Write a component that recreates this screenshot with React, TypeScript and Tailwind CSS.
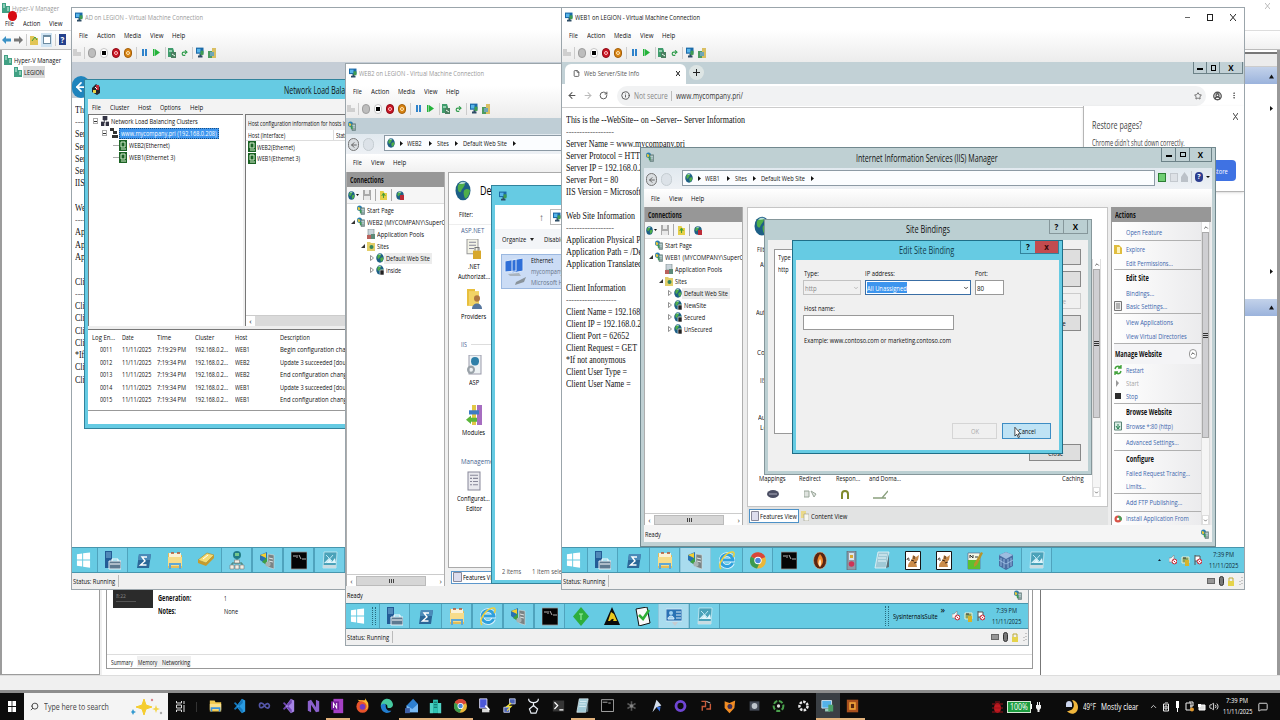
import { useLayoutEffect, useRef, useState, type ReactNode } from 'react';
import { ArrowLeft, ArrowRight, RotateCw, Info, Star, Search, MessageSquare, Volume2, ChevronUp, MoreVertical, CircleUserRound, FileIcon, Undo2 } from 'lucide-react';

// Text squeezed horizontally into a given width
function T({ w, className = '', children }: { w: number; className?: string; children: ReactNode }) {
  const ref = useRef<HTMLSpanElement>(null);
  const [k, setK] = useState(1);
  useLayoutEffect(() => {
    if (ref.current) setK(w / ref.current.offsetWidth);
  }, [w, children]);
  return (
    <span className={`inline-block shrink-0 whitespace-nowrap leading-none ${className}`} style={{ width: w }}>
      <span ref={ref} className="inline-block origin-left" style={{ transform: `scaleX(${k})` }}>{children}</span>
    </span>
  );
}

/* ---------- icons ---------- */

function Svg({ className = 'w-4 h-[19px]', box = '0 0 16 19', children }: { className?: string; box?: string; children: ReactNode }) {
  return <svg viewBox={box} preserveAspectRatio="none" className={`shrink-0 ${className}`}>{children}</svg>;
}

function Tri({ className = '' }: { className?: string }) {
  return <Svg className={`h-[5px] w-[3px] ${className}`} box="0 0 3 5"><path d="M0 0l3 2.500L0 5Z" fill="#111" /></Svg>;
}

function Expander({ open }: { open?: boolean }) {
  return (
    <Svg className="mr-[2px] h-[6px] w-[4px]" box="0 0 4 6">
      {open ? <path d="M4 1v4H0Z" fill="#333" /> : <path d="M.5.5l3 2.500-3 2.500Z" fill="#fff" stroke="#777" strokeWidth=".8" />}
    </Svg>
  );
}

function Globe({ className = 'w-2 h-[10px]', stopped = false }: { className?: string; stopped?: boolean }) {
  return (
    <Svg className={className} box="0 0 16 16">
      <circle cx="8" cy="8" r="7.5" fill="#1d5f86" />
      <path d="M3 4C6 1 9 1 10 3 9 6 7 6 6 9 4 10 2 8 3 4ZM9 8c3-2 5-1 6 0-1 4-3 6-5 6-1-2-2-4-1-6Z" fill="#4fae4a" />
      <path d="M4 3c2-2 5-2 7-1-2 1-5 1-7 1Z" fill="#cfe9f5" opacity=".8" />
      {stopped && <path d="M8 8h8v8H8Z" fill="#222" stroke="#fff" />}
    </Svg>
  );
}

function MonitorIcon({ className = 'w-2 h-[10px]' }: { className?: string }) {
  return (
    <Svg className={className} box="0 0 16 18">
      <path d="M0 1h15v10H0Z" fill="#1b6aa8" />
      <path d="M2 3h7v6H2Z" fill="#57b4ea" />
      <path d="M7 11h4v3H7ZM4 14h9v3H4Z" fill="#2c4c66" />
      <path d="M9 6h6v7H9Z" fill="#3f9c50" />
    </Svg>
  );
}

function IisIcon({ className = 'w-2 h-[10px]' }: { className?: string }) {
  return (
    <Svg className={className} box="0 0 16 18">
      <circle cx="5" cy="6" r="5" fill="#2a7fb0" />
      <path d="M1 5c3-3 4 0 6 1-1 3-3 4-4 4Z" fill="#e4c93a" />
      <path d="M8 5h7v12H8Z" fill="#8fa3a3" stroke="#4c6868" />
      <path d="M9 8h5M9 11h5" stroke="#dff" />
      <path d="M5 9h4v6H6Z" fill="#3c9a58" />
    </Svg>
  );
}

const guestIcons: Record<string, ReactNode> = {
  start: <path d="M1 3.5 6.6 2.7V9H1ZM7.6 2.5 15 1.5V9H7.6ZM1 10h5.6v6.4L1 15.6ZM7.6 10H15v7.6L7.6 16.6Z" fill="#fff" />,
  server: <><path d="M0 0h7v17H0Z" fill="#245c96" /><path d="M1 2h5M1 4h5M1 6h5" stroke="#7fb6dc" /><path d="M4 10h12v8H4Z" fill="#5d7990" stroke="#e6f3f9" /><path d="M7 10V8h6v2M5 13h10" stroke="#fff" fill="none" /></>,
  ps: <><path d="M3 3h12l-2 14H1Z" fill="#2b6798" /><path d="M3 3h12l-1 6H2Z" fill="#4b8bb9" /><path d="M11 6H6l3 4-4.500 4h6" stroke="#fff" strokeWidth="1.400" fill="none" /></>,
  folder: <><path d="M1 2h6l1 2h7v13H1Z" fill="#e0bd5c" /><path d="M2 2h12v4H2Z" fill="#f9f2d8" /><path d="M4 2h3M10 2h3" stroke="#b5522c" strokeWidth="1.5" /><path d="M1 6h14v9H1Z" fill="#f6dc8a" /><path d="M3 18v-5h10v5" stroke="#5da7d5" strokeWidth="2" fill="none" /></>,
  gold: <><path d="M0 9 9 2l7 2-8 8Z" fill="#f4dc73" stroke="#a98522" strokeWidth=".6" /><path d="M0 9v3l8 3 8-8V4l-8 8Z" fill="#c79b2c" /><path d="M5 8l5-4" stroke="#fff" /></>,
  net: <><circle cx="8" cy="4" r="4" fill="#217b85" /><path d="M6 2h4v3H6Z" fill="#74c78c" /><path d="M8 8v4M3 14v-2h10v2" stroke="#476" fill="none" /><path d="M5.500 9h5v3h-5ZM1 14h4v4H1ZM6 14h4v4H6ZM11 14h4v4h-4Z" fill="#f2efe4" stroke="#777" strokeWidth=".6" /></>,
  iis: <><path d="M0 4 7 1v13L0 9Z" fill="#2872b1" /><path d="M0 4 6 2v5Z" fill="#f3cf31" /><path d="M2 11l5-5v8Z" fill="#3f9e43" /><path d="M8 3l6 1v14l-6-2Z" fill="#7a8384" stroke="#d4dede" strokeWidth=".6" /><path d="M9 7l4 1M9 10l4 1" stroke="#e1e5e5" /><circle cx="8" cy="13" r="2.6" fill="#a9b3b3" /></>,
  cmd: <><path d="M0 1h16v17H0Z" fill="#050505" stroke="#999" strokeWidth=".8" /><path d="M2 5h3M6 4v3M8 4l2 4M11 8h4" stroke="#ddd" strokeWidth=".8" /></>,
  picture: <><path d="M2 1h13l-1 16H1Z" fill="#4aa2b9" stroke="#d6f0f8" strokeWidth=".7" /><path d="M2 12l5-5 3 4 3-4 1 5Z" fill="#e0f5fb" /><path d="M4 4l7 7M11 4 4 12" stroke="#b9e7f4" /><path d="M1 14h13v3H1Z" fill="#c8dce2" /></>,
  ie: <><path d="M13.5 12a6 6 0 1 1 .5-3H4" stroke="#e6f6ff" strokeWidth="4.6" fill="none" /><path d="M13.5 12a6 6 0 1 1 .5-3H4" stroke="#2fa0dd" strokeWidth="3" fill="none" /><path d="M2 18C-2 13 7 0 14 1c2 1 1 4 0 5" stroke="#f0cf3c" strokeWidth="1.5" fill="none" /></>,
  diamond: <><path d="M8 0 16 9.500 8 19 0 9.500Z" fill="#2dae3c" /><path d="M6 7h4M8 7v6" stroke="#9bf0a2" strokeWidth="1.1" /></>,
  alert: <><path d="M8 0 16 18H0Z" fill="#0b0b0b" /><path d="M7 5l3 2 3 7H9c2-3-1-3-3 0H4Z" fill="#e9c91d" /></>,
  check: <><path d="M1 2l11-2 3 16-11 3Z" fill="#fafafa" stroke="#111" /><path d="M4 8l4 4 6-9" stroke="#2fae36" strokeWidth="2.6" fill="none" /></>,
  card: <><path d="M0 2h16v12H0Z" fill="#2a72b4" stroke="#dcecf8" strokeWidth=".8" /><circle cx="5" cy="6" r="2" fill="#9fd2f2" /><path d="M2 12c0-4 6-4 6 0ZM10 5h5M10 8h5M10 11h5" fill="#9fd2f2" stroke="#d9ecf8" /><path d="M6 15h6l-3 4Z" fill="#c6cbd0" /></>,
  chrome: <><circle cx="8" cy="9.500" r="8" fill="#e9b73a" /><path d="M8 9.500 1 5.500A8 8 0 0 1 15.300 6Z" fill="#d8453a" /><path d="M8 9.500 1 5.500A8 8 0 0 0 7 17.500L10 11Z" fill="#3b9a4e" /><circle cx="8" cy="9.500" r="3.700" fill="#fff" /><circle cx="8" cy="9.500" r="2.800" fill="#4a86dc" /></>,
  flame: <><ellipse cx="8" cy="9.500" rx="6.500" ry="8.500" fill="#5a2511" stroke="#d8b490" strokeWidth=".6" /><path d="M8 3c4 5 4 9 0 13-4-4-3-8 0-13Z" fill="#f08a2c" /><path d="M8 8c2 3 1 6 0 8-2-2-2-5 0-8Z" fill="#ffe9c2" /></>,
  thumb: <><path d="M4 0h9v19H4Z" fill="#8d9aa8" stroke="#4c5a67" strokeWidth=".6" /><path d="M6 2h5v7H6Z" fill="#dce5ec" /><circle cx="8.500" cy="13" r="2.800" fill="#cf3456" /><path d="M7 4h3v3H7Z" fill="#d7a932" /></>,
  note: <><path d="M4 1h11l-3 16H1Z" fill="#9fc9d6" stroke="#e8f6fa" strokeWidth=".8" /><path d="M5 4h8M4 7h8M4 10h8" stroke="#e9f7fb" /><path d="M12 17l3-14v13Z" fill="#5b7077" /></>,
  tiger: <><path d="M.5.5h15v18H.5Z" fill="#fff" stroke="#151515" /><path d="M3 16c0-5 3-5 4-8l1-4 3 2 3-2-1 5-2 2 1 5Z" fill="#c98b4a" /><path d="M2 9c1-3 2-3 2 1M6 9l3 1M9 12l3-1M9 5v3" stroke="#2c1c10" strokeWidth=".9" fill="none" /></>,
  npp: <><path d="M1 2h12v16H1Z" fill="#f3f8e9" stroke="#557" strokeWidth=".6" /><path d="M1 9h12v9H1Z" fill="#5dc02f" /><path d="M3 7V4l3 3V4M8 6h3" stroke="#333" fill="none" /><path d="M7 13l7-12 2 1-6 12-3 2Z" fill="#b7942b" /></>,
  cube: <><path d="M8 1l7 3v11l-7 4-7-4V4Z" fill="#4a6ea3" /><path d="M8 1l7 3-7 4-7-4Z" fill="#9dbde0" /><path d="M3 7v8M6 8v9M10 8v9M13 7v8M1 9l7 4 7-4" stroke="#a6c7ea" strokeWidth=".8" fill="none" /></>,
};

const hostIcons: Record<string, ReactNode> = {
  explorer: <><path d="M1 3h6l1 2h7v11H1Z" fill="#f2c94e" /><path d="M1 7h14v7H1Z" fill="#fbe08a" /><path d="M3 16v-4h10v4" stroke="#3d93dc" strokeWidth="2" fill="none" /></>,
  vscode: <><path d="M11 1l4 2v13l-4 2-7-8Z" fill="#2a9be2" /><path d="M1 6l2-1 9 9v4ZM1 13l2 1 9-8V1Z" fill="#1478bd" /></>,
  loop: <path d="M8 9c-3-5-7-3-6 1 1 3 4 1 6-1s5-4 6 0c0 4-4 4-6 0Z" stroke="#5456a8" strokeWidth="2" fill="none" />,
  vs: <><path d="M11 1l4 2v13l-4 2-7-8Z" fill="#a685e6" /><path d="M1 6l2-1 9 9v4ZM1 13l2 1 9-8V1Z" fill="#7147b3" /></>,
  vs2: <path d="M1 4l4-2 6 9V2l4 2v12l-4 1-6-9v9l-4-2Z" fill="#8b61cc" />,
  onenote: <><path d="M3 1h12v17H3Z" fill="#a641c4" /><path d="M0 4h10v10H0Z" fill="#741b99" /><path d="M3 12V6l4 6V6" stroke="#fff" fill="none" strokeWidth="1.200" /></>,
  firefox: <><circle cx="8" cy="10" r="7.500" fill="#e8532c" /><path d="M2 2c2 3 5 1 8 3 4 2 4 7 1 9 4 0 4-4 4-8l-4-6c1 3-1 3-3 3Z" fill="#f8b632" /><circle cx="8" cy="10.500" r="3.500" fill="#713ac2" /></>,
  edge: <><path d="M1 10C1 4 5 1 9 1c4 0 7 4 7 7 0 4-6 5-7 3 1-4-4-5-8-1Z" fill="#46c9a0" /><path d="M1 9c2-3 7-3 6 1 0 4 4 6 7 5-4 5-13 3-13-6Z" fill="#227ed0" /></>,
  box: <><path d="M2 9l8-8 6 6v10H2Z" fill="#2d7fd0" /><path d="M2 9l7 4 7-6v10H2Z" fill="#78b9f3" /><path d="M0 12h6v6H0Z" fill="#3e5fa5" /></>,
  farm: <><path d="M5 2h6v16H5Z" fill="#2dc3b3" /><path d="M1 6h4v12H1ZM11 6h4v12h-4Z" fill="#4fd2c4" /><path d="M6 5h4M6 8h4M6 11h4" stroke="#0b5550" /></>,
  chrome: guestIcons.chrome,
  pcblue: <><path d="M2 1h9v11H2Z" fill="#4c58d9" stroke="#e8e8ff" /><path d="M5 13h9v4H5Z" fill="#dadada" /><path d="M9 9l5 5" stroke="#fff" strokeWidth="2" /></>,
  putty: <><path d="M8 1h7v6H8ZM1 11h7v6H1Z" fill="#4d63b5" stroke="#d0d6ee" /><path d="M10 6L5 10h5l-5 5" stroke="#f4e13b" strokeWidth="1.500" fill="none" /></>,
  medal: <><path d="M2 1c0 6 12 6 12 0M8 6v4" stroke="#e9eef5" strokeWidth="1.500" fill="none" /><path d="M8 9l5 4-2 5H5l-2-5Z" stroke="#e9eef5" strokeWidth="1.500" fill="none" /></>,
  term: <><path d="M1 3h14v13H1Z" fill="#353535" /><path d="M3 5l4 4-4 4M9 14h5" stroke="#fff" strokeWidth="1.500" fill="none" /></>,
  note: guestIcons.note,
  cmd: <><path d="M.5 2h15v14H.5Z" fill="#050505" stroke="#c5c5c5" /><path d="M2 5h6M9 6h3" stroke="#fff" strokeWidth=".8" /></>,
  atom: <><path d="M8 4v11M3 6.500l10 6M13 6.500l-10 6" stroke="#555" strokeWidth="2" /><circle cx="8" cy="9.500" r="2" fill="#888" /></>,
  plane: <><path d="M3 17L8 2l6 7-6 2Z" fill="#d3ddec" /><path d="M8 11l5-1-1 6Z" fill="#356fe0" /></>,
  ring: <circle cx="8" cy="9.500" r="5.500" stroke="#6f46d3" strokeWidth="3.500" fill="none" />,
  glyph: <><path d="M3 4h5v6H4v5M9 13h5V7" stroke="#c95a3a" strokeWidth="1.700" fill="none" /><path d="M9 4l5 2" stroke="#e7e7e7" /></>,
  blend: <><path d="M2 4l6 2 7-3-1 9-6 6-6-6Z" fill="#f08c24" /><circle cx="8.500" cy="10" r="3" fill="#3d2d54" /></>,
  cam: <><path d="M2 4h12v11H2Z" fill="#454b57" /><circle cx="8" cy="9.500" r="3.500" fill="#bfc5cc" /></>,
  swirl: <><circle cx="8" cy="9.500" r="6" stroke="#4aa04d" strokeWidth="2.500" strokeDasharray="5 2" fill="none" /><circle cx="8" cy="9.500" r="2" fill="#ddd" /></>,
  gear: <circle cx="8" cy="9.500" r="5" stroke="#e9e9e9" strokeWidth="3" strokeDasharray="3 1.500" fill="none" />,
  vm: <><path d="M1 3h12v9H1Z" fill="#54b1e8" stroke="#dff1fb" /><path d="M5 13h6v3H5Z" fill="#9cb" /><path d="M9 8h6v8H9Z" fill="#4c9f68" /></>,
  orange: <><path d="M1 2h14v15H1Z" fill="#a9501d" /><path d="M4 5h8v9H4Z" fill="#f0a43a" /><path d="M6 7h4v5H6Z" fill="#552410" /></>,
};

/* ---------- shared bits ---------- */

function MenuBar({ items, className = '' }: { items: [string, number][]; className?: string }) {
  return (
    <div className={`flex items-center gap-[9px] text-[8px] text-[#111] ${className}`}>
      {items.map(([name, w]) => <T key={name} w={w}>{name}</T>)}
    </div>
  );
}

function VmToolbar() {
  return (
    <div className="flex h-[18px] shrink-0 items-center pb-px pl-px">
      <Svg className="h-[9px] w-2" box="0 0 8 9"><path d="M0 1h4v7H0ZM4 4h4v4H4Z" fill="#cfcfcf" /></Svg>
      <i className="ml-[3px] h-3 w-px bg-[#ccc]" />
      <div className="ml-[3px] flex gap-1">
        <span className="h-[10px] w-2 rounded-full border border-[#9d9d9d] bg-[#bdbdbd]" />
        <span className="flex h-[10px] w-2 items-center justify-center rounded-full border border-[#c5c5c5] bg-white"><i className="h-[4px] w-[4px] bg-black" /></span>
        <span className="flex h-[10px] w-2 items-center justify-center rounded-full border border-[#8b0c16] bg-[#cb1424]"><i className="h-1 w-1 rounded-full border border-[#ffc4c4]" /></span>
        <span className="flex h-[10px] w-2 items-center justify-center rounded-full border border-[#a25d09] bg-[#d98412]"><i className="h-1 w-1 rounded-full border border-[#ffe6b8]" /></span>
      </div>
      <i className="ml-1 h-3 w-px bg-[#ccc]" />
      <Svg className="ml-[5px] h-[7px] w-[5px]" box="0 0 5 7"><path d="M0 0h2v7H0ZM3 0h2v7H3Z" fill="#2f83cb" /></Svg>
      <Svg className="ml-[6px] h-[7px] w-[7px]" box="0 0 7 7"><path d="M0 0h1.500v7H0ZM2 0l5 3.500L2 7Z" fill="#23b33a" /></Svg>
      <i className="ml-[5px] h-3 w-px bg-[#ccc]" />
      <Svg className="ml-[2px] h-[10px] w-2" box="0 0 8 10"><path d="M0 0h5l1 3v6H0Z" fill="#3f9c6c" /><path d="M3 4h5v6H3Z" fill="#4a7d5f" /><path d="M1 3h3M4 6l3 2" stroke="#e8fff0" /></Svg>
      <Undo2 className="ml-[5px] h-2 w-[7px] -scale-x-100 text-[#2f9c4b]" strokeWidth={4} />
      <i className="ml-1 h-3 w-px bg-[#ccc]" />
      <MonitorIcon className="ml-[3px] h-[11px] w-2" />
      <Svg className="ml-1 h-[10px] w-2" box="0 0 8 10"><path d="M0 3h4v7H0Z" fill="#4b9c60" /><path d="M4 0h4v10H4Z" fill="#d9bf63" /><path d="M2 4h4v4H2Z" fill="#6fa6b8" /></Svg>
    </div>
  );
}

function TaskSlot({ icon, state }: { icon: string; state?: string }) {
  return (
    <div className={`flex w-[31px] shrink-0 items-center justify-center ${state === 'open' ? 'border-x border-[#4fa3bd] bg-[#75cfe7]' : ''} ${state === 'active' ? 'border-x border-[#8fc7dc] bg-[#a9dcee]' : ''}`}>
      <Svg>{guestIcons[icon]}</Svg>
    </div>
  );
}

function TrayIcons() {
  return (
    <div className="flex items-center gap-1">
      <Svg className="h-[10px] w-2" box="0 0 8 10"><path d="M0 3h2l3-3v9L2 7H0Z" fill="#f4f4f4" stroke="#777" strokeWidth=".5" /><circle cx="5.500" cy="6.500" r="2.400" fill="#fff" stroke="#c92636" /><path d="M4.500 5.500l2 2" stroke="#c92636" /></Svg>
      <Svg className="h-[11px] w-[9px]" box="0 0 9 11"><path d="M1 2h7v6H1Z" fill="#88a35f" stroke="#e7f1d9" /><path d="M4 5h4v6H4Z" fill="#d5b42b" /><path d="M2 3h3" stroke="#333" /></Svg>
      <Svg className="h-[10px] w-2" box="0 0 8 10"><path d="M1 0v10M1 1h5v5H1" fill="#fff" stroke="#555" /><circle cx="5.500" cy="6.500" r="2.400" fill="#fff" stroke="#c92636" /><path d="M4.500 5.500l2 2M6.500 5.500l-2 2" stroke="#c92636" strokeWidth=".8" /></Svg>
    </div>
  );
}

function Clock() {
  return (
    <div className="flex w-[30px] flex-col items-center gap-[3px] pb-px text-[8px] text-[#0d2a35]">
      <T w={21}>7:39 PM</T>
      <T w={29}>11/11/2025</T>
    </div>
  );
}

const vmMenu: [string, number][] = [['File', 9], ['Action', 18], ['Media', 17], ['View', 13], ['Help', 13]];

function VmWindow({ className, title, titleWidth, active, icons, grip, tray, children }: {
  className: string; title: string; titleWidth: number; active?: boolean; icons: [string, string?][]; grip?: boolean; tray?: ReactNode; children: ReactNode;
}) {
  return (
    <div className={`absolute flex h-[583px] w-[684px] flex-col border border-[#9ba5ab] bg-[#f0f0f0] ${className}`}>
      <div className="flex shrink-0 flex-col bg-linear-to-b from-white from-40% to-[#ececec]">
        <div className="flex h-[18px] items-center pl-[3px] text-[8px]">
          <MonitorIcon />
          <T w={titleWidth} className={`ml-[2px] ${active ? 'text-[#111]' : 'text-[#999]'}`}>{title}</T>
          {active && (
            <div className="ml-auto flex items-center gap-[17px] pr-2 text-[#222]">
              <i className="h-px w-[5px] bg-[#666]" />
              <i className="h-[7px] w-[6px] border border-[#222]" />
              <Svg className="h-[7px] w-[6px]" box="0 0 6 7"><path d="M0 0l6 7M6 0 0 7" stroke="#222" /></Svg>
            </div>
          )}
        </div>
        <MenuBar items={vmMenu} className="h-[18px] pl-[7px]" />
        <VmToolbar />
      </div>
      <div className="relative h-[485px] shrink-0 overflow-hidden bg-white">{children}</div>
      <div className="flex h-[26px] shrink-0 border-y border-[#4796ae] bg-[#66cbe3]">
        <div className="flex w-[25px] items-center justify-center pr-[2px]"><Svg className="h-[18px] w-[15px]">{guestIcons.start}</Svg></div>
        {grip && <div className="my-[3px] ml-px mr-[3px] w-[4px] border-x border-dotted border-[#276b80]" />}
        {icons.map(([icon, state], i) => <TaskSlot key={i} icon={icon} state={state} />)}
        <div className="ml-auto flex items-center">{tray}</div>
      </div>
      <div className="flex h-[16px] shrink-0 items-center pl-px text-[8px] text-[#111]">
        <T w={42}>Status: Running</T>
        <i className="ml-[3px] h-3 w-px bg-[#bbb]" />
        <div className="ml-auto flex items-center gap-1 pr-px">
          <Svg className="h-[6px] w-2" box="0 0 8 6"><path d="M0 0h8v6H0Z" fill="#676767" /><path d="M1 2h6M1 4h6" stroke="#eee" strokeWidth=".7" /></Svg>
          <i className="h-[10px] w-[5px] rounded-sm border border-[#333] bg-[#777]" />
          <Svg className="h-[9px] w-[6px]" box="0 0 6 9"><path d="M0 4h6v5H0Z" fill="#e5d34b" /><path d="M1 4V1h4v3" stroke="#bba936" fill="none" /></Svg>
          <Svg className="h-2 w-[5px]" box="0 0 5 8"><path d="M4 0v8M2 4v4" stroke="#999" strokeDasharray="1 2" /></Svg>
        </div>
      </div>
    </div>
  );
}

function SiteInfo({ className, host }: { className: string; host: string }) {
  const lines: [string, number][] = [
    ['This is the --WebSite-- on --Server-- Server Information', 179], ['------------------', 48],
    [`Server Name = ${host}`, 119], ['Server Protocol = HTTP/1.1', 91], ['Server IP = 192.168.0.208', 85], ['Server Port = 80', 52], ['IIS Version = Microsoft-IIS/8.5', 99], ['', 0],
    ['Web Site Information', 69], ['------------------', 48], ['Application Physical Path = C:\\inetpub', 128], ['Application Path = /Default', 91], ['Application Translated Path = C:\\', 112], ['', 0],
    ['Client Information', 60], ['-------------------', 50], ['Client Name = 192.168.0.201', 94], ['Client IP = 192.168.0.201', 83], ['Client Port = 62652', 63], ['Client Request = GET', 71],
    ['*If not anonymous', 60], ['Client User Type =', 61], ['Client User Name =', 65],
  ];
  return (
    <div className={`flex flex-col font-['Liberation_Serif',serif] text-[10.67px] text-[#111] ${className}`}>
      {lines.map(([text, w], i) => (
        <div key={i} className={`flex flex-1 items-center ${text.startsWith('--') ? 'text-[#777]' : ''}`}>{text && <T w={w}>{text}</T>}</div>
      ))}
    </div>
  );
}

/* ---------- IIS parts ---------- */

function AddressBar({ server, className = '', children }: { server: string; className?: string; children?: ReactNode }) {
  return (
    <div className={`flex shrink-0 bg-linear-to-b from-[#e1e9ef] to-[#eef1f5] ${className}`}>
      <div className="flex w-[38px] shrink-0 items-center gap-1 pl-[2px]">
        <span className="flex h-[13px] w-[11px] items-center justify-center rounded-full border border-[#777] bg-[#d9dde0]"><ArrowLeft className="h-2 w-2 text-[#666]" strokeWidth={3} /></span>
        <span className="h-[13px] w-[11px] rounded-full border border-[#c5cdd2] bg-[#dce2e8]" />
      </div>
      <div className="mb-[3px] flex flex-1 items-center border border-[#8c9aa5] bg-[#fbfdff] pl-[2px] text-[8px] text-[#111]">
        <Globe />
        <Tri className="ml-[5px]" /><T w={15} className="ml-[4px]">{server}</T>
        <Tri className="ml-[7px]" /><T w={12} className="ml-[5px]">Sites</T>
        <Tri className="ml-[6px]" /><T w={44} className="ml-[5px]">Default Web Site</T>
        <Tri className="ml-[6px]" />
      </div>
      {children}
    </div>
  );
}

function ConnectionsPane({ server, sites, tail }: { server: string; sites: [string, number, boolean?][]; tail: string }) {
  return (
    <div className="flex w-[99px] shrink-0 flex-col overflow-hidden border-x border-[#aeaeae] bg-white text-[8px] text-[#111]">
      <div className="flex h-[15px] shrink-0 items-center bg-[#979797] pl-[3px] font-bold"><T w={34}>Connections</T></div>
      <div className="flex h-[17px] shrink-0 items-center gap-1 border-b border-[#ddd] bg-[#f6f6f6] pl-px">
        <Globe className="h-[9px] w-[7px]" /><Svg className="-ml-[3px] h-[2px] w-[3px]" box="0 0 3 2"><path d="M0 0h3L1.500 2Z" fill="#111" /></Svg>
        <Svg className="h-[10px] w-2" box="0 0 8 10"><path d="M0 0h8v10H0Z" fill="#aaa" /><path d="M2 0h4v4H2ZM1 6h6v4H1Z" fill="#e9e9e9" /></Svg>
        <i className="h-3 w-px bg-[#aaa]" />
        <Svg className="h-[10px] w-[7px]" box="0 0 8 10"><path d="M0 1h4l1 2h3v7H0Z" fill="#e5cf48" /><path d="M2 6l2-3 2 3M4 4v4" stroke="#3d9b35" fill="none" /></Svg>
        <i className="h-3 w-px bg-[#aaa]" />
        <span className="relative"><Globe className="block h-[9px] w-2" /><i className="absolute right-0 bottom-0 h-[5px] w-1 bg-[#bb2c38]" /></span>
      </div>
      <div className="flex-1">
        <div className="flex h-3 items-center pl-[10px]"><IisIcon /><T w={27} className="ml-[2px]">Start Page</T></div>
        <div className="flex h-3 items-center pl-[4px]"><Expander open /><IisIcon /><T w={78} className="ml-[2px]">{server} (MYCOMPANY\Super{tail}</T></div>
        <div className="flex h-3 items-center pl-[20px]">
          <Svg className="h-[10px] w-2" box="0 0 8 10"><path d="M1 0h6v6H1Z" fill="#c9d3da" stroke="#788" strokeWidth=".6" /><path d="M0 6h5v4H0Z" fill="#b9615c" /><path d="M4 5h4v5H4Z" fill="#5d8a79" /></Svg>
          <T w={47} className="ml-[2px]">Application Pools</T>
        </div>
        <div className="flex h-3 items-center pl-[14px]">
          <Expander open />
          <Svg className="h-[10px] w-2" box="0 0 8 10"><path d="M0 1h3l1 1h4v8H0Z" fill="#e2ce68" /><circle cx="4.500" cy="6" r="2" fill="#31855f" /></Svg>
          <T w={12} className="ml-[2px]">Sites</T>
        </div>
        {sites.map(([name, w, stopped], i) => (
          <div key={name} className="flex h-3 items-center pl-[23px]">
            <Expander />
            <Globe stopped={stopped} />
            <span className={`flex h-[11px] items-center px-[2px] ${i === 0 ? 'bg-[#ececec]' : ''}`}><T w={w}>{name}</T></span>
          </div>
        ))}
      </div>
      <div className="flex h-3 shrink-0 items-center border-t border-[#ccc] text-[8px] text-[#444]">
        <span className="w-[9px] text-center leading-none">‹</span>
        <div className="flex h-[10px] w-[70px] items-center justify-center gap-px border border-[#bbb] bg-[#d6d6d6]">
          <i className="h-[4px] w-px bg-[#444]" /><i className="h-[4px] w-px bg-[#444]" /><i className="h-[4px] w-px bg-[#444]" />
        </div>
        <span className="ml-auto pr-[2px] leading-none">›</span>
      </div>
    </div>
  );
}

/* ---------- AD machine ---------- */

function TreeBox() {
  return <span className="flex h-[6px] w-[5px] shrink-0 items-center justify-center border border-[#aaa] bg-white"><i className="h-px w-[3px] bg-[#333]" /></span>;
}

function NlbWindow() {
  const log = [
    ['0011', '7:19:29 PM', 'WEB1', 'Begin configuration change', 76],
    ['0012', '7:19:34 PM', 'WEB2', 'Update 3 succeeded [double', 74],
    ['0013', '7:19:34 PM', 'WEB2', 'End configuration change', 70],
    ['0014', '7:19:34 PM', 'WEB1', 'Update 3 succeeded [double', 74],
    ['0015', '7:19:34 PM', 'WEB1', 'End configuration change', 70],
  ] as const;
  const nic = <Svg className="h-[11px] w-2" box="0 0 8 11"><path d="M0 0h8v11H0Z" fill="#1c6325" /><path d="M2 2h4v5H2ZM2 9h5" fill="none" stroke="#d7efcf" /></Svg>;
  return (
    <div className="absolute top-[17px] left-[12px] flex h-[350px] w-[420px] flex-col border border-[#32839c] bg-[#66cbe3] px-[3px] pb-[4px] text-[8px] text-[#111]">
      <div className="flex h-[19px] shrink-0 items-center pl-1">
        <Svg className="h-[11px] w-2" box="0 0 8 11"><path d="M4 0l4 3v6l-3 2-5-3V4Z" fill="#26262e" /><path d="M4 1h3v5H4Z" fill="#c12b3a" /><path d="M1 6h3v3H1Z" fill="#e6d146" /><path d="M3 3l2 2" stroke="#fff" /></Svg>
        <T w={109} className="ml-[184px] text-[10px]">Network Load Balancing Manager</T>
      </div>
      <MenuBar items={[['File', 9], ['Cluster', 19], ['Host', 13], ['Options', 21], ['Help', 13]]} className="h-[15px] shrink-0 bg-[#f3f3f3] pl-[4px]" />
      <div className="flex h-[212px] shrink-0 gap-[2px] bg-[#f0f0f0]">
        <div className="w-[155px] border-t border-l border-[#777] bg-white">
          <div className="flex h-3 items-center pl-[4px]"><TreeBox />
            <Svg className="ml-[3px] h-[10px] w-2" box="0 0 8 10"><path d="M2 0h4v4H2ZM0 6h3v4H0ZM5 6h3v4H5ZM3.500 4v3" fill="#334" stroke="#334" strokeWidth=".7" /></Svg>
            <T w={87} className="ml-[2px]">Network Load Balancing Clusters</T>
          </div>
          <div className="flex h-3 items-center pl-[13px]"><TreeBox />
            <Svg className="ml-[3px] h-[10px] w-2" box="0 0 8 10"><path d="M0 0h4v3H0ZM3 3h4v3H3ZM2 7h6v3H2Z" fill="#333" /></Svg>
            <span className="ml-px flex h-[11px] items-center border border-dotted border-[#1b4d80] bg-[#3d95ee] px-px text-white"><T w={96}>www.mycompany.pri (192.168.0.208)</T></span>
          </div>
          {[['WEB2(Ethernet)', 41], ['WEB1(Ethernet 3)', 46]].map(([name, w]) => (
            <div key={name} className="flex h-3 items-center pl-[24px]"><i className="h-px w-[6px] bg-[#aaa]" />{nic}<T w={w as number} className="ml-[2px]">{name}</T></div>
          ))}
        </div>
        <div className="flex flex-1 flex-col overflow-hidden border-t border-l border-[#777] bg-white">
          <div className="flex h-[15px] items-center bg-[#f0f0f0] pl-[2px]"><T w={116}>Host configuration information for hosts in cluster</T></div>
          <div className="flex h-[11px] items-center border-b border-[#ddd] pl-[2px]"><T w={37}>Host (Interface)</T><i className="mr-[2px] ml-[48px] h-full w-px bg-[#ddd]" /><T w={14}>Status</T></div>
          {[['WEB2(Ethernet)', 38], ['WEB1(Ethernet 3)', 43]].map(([name, w]) => (
            <div key={name} className="flex h-[11.500px] items-center pl-[2px]">{nic}<T w={w as number} className="ml-px">{name}</T><span className="ml-auto mr-[48px]"><T w={28}>Converged</T></span></div>
          ))}
          <div className="mt-auto flex h-[11px] border-t border-[#ccc] bg-[#dadada]"><span className="w-[9px] bg-white text-center leading-[9px]">‹</span></div>
        </div>
      </div>
      <div className="flex flex-1 flex-col border-t-[3px] border-[#eee] bg-white">
        <div className="flex h-[14px] items-center border-t border-[#777] pl-[4px]">
          <T w={23}>Log En...</T><T w={12} className="ml-[7px]">Date</T><T w={14} className="ml-[23px]">Time</T><T w={19} className="ml-[24px]">Cluster</T><T w={12} className="ml-[21px]">Host</T><T w={30} className="ml-[33px]">Description</T>
        </div>
        {log.map(([id, time, host, text, w]) => (
          <div key={id} className="flex h-[12.500px] items-center pl-[12px]">
            <T w={12}>{id}</T><T w={29} className="ml-[10px]">11/11/2025</T><T w={29} className="ml-[6px]">{time}</T><T w={33} className="ml-[9px]">192.168.0.2...</T><T w={15} className="ml-[7px]">{host}</T><T w={w} className="ml-[30px]">{text}</T>
          </div>
        ))}
        <div className="mt-[4px] border-t border-[#999]" />
      </div>
    </div>
  );
}

function AdMachine() {
  return (
    <VmWindow className="top-[7px] left-[71px]" title="AD on LEGION - Virtual Machine Connection" titleWidth={118}
      icons={[['server', 'open'], ['ps'], ['folder'], ['gold'], ['net', 'open'], ['iis', 'open'], ['cmd', 'open'], ['picture', 'open']]}>
      <div className="flex h-[36px] items-end bg-[#c5cdd6]">
        <span className="flex h-[22px] w-[18px] items-center justify-center rounded-full bg-[#1f84bd]"><ArrowLeft className="h-[14px] w-[14px] text-white" strokeWidth={3} /></span>
      </div>
      <SiteInfo className="mt-[5px] h-[282.200px] pl-[3px]" host="www.mycompany.pri" />
      <NlbWindow />
    </VmWindow>
  );
}

/* ---------- WEB2 machine ---------- */

function Feature({ icon, lines, className = '' }: { icon: ReactNode; lines: [string, number][]; className?: string }) {
  return (
    <div className={`flex w-[49px] flex-col items-center ${className}`}>
      <Svg className="h-[20px] w-4">{icon}</Svg>
      <div className="mt-[3px] flex flex-col items-center gap-[2px]">{lines.map(([t, w]) => <T key={t} w={w}>{t}</T>)}</div>
    </div>
  );
}

function NetworkWindow() {
  return (
    <div className="absolute top-[67px] left-[145px] flex h-[399px] w-[400px] flex-col border border-[#32839c] bg-[#66cbe3] px-[3px] pb-[3px] text-[8px] text-[#111]">
      <div className="flex h-[19px] shrink-0 items-center pl-[4px]"><MonitorIcon /></div>
      <div className="flex h-[24px] shrink-0 items-center bg-white pl-[44px]">
        <span className="text-[10px] text-[#555]">↑</span>
        <span className="ml-[6px] flex h-[16px] w-[200px] items-center border border-[#bbb] pl-[2px]"><MonitorIcon /></span>
      </div>
      <div className="flex h-[20px] shrink-0 items-center bg-[#f3f5f8] pl-[7px]"><T w={24}>Organize</T><Svg className="ml-[4px] h-[3px] w-[4px]" box="0 0 4 3"><path d="M0 0h4L2 3Z" fill="#222" /></Svg><T w={73} className="ml-[10px]">Disable this network device</T></div>
      <div className="flex-1 bg-white pt-[5px] pl-[6px]">
        <div className="flex h-[35px] items-center border border-[#9bb8e0] bg-[#cbdcf5]">
          <Svg className="ml-[2px] h-[29px] w-[24px]" box="0 0 24 29">
            <path d="M1 4 12 2v12L1 15ZM8 3l11-2v13L8 16Z" fill="#2f6fd8" stroke="#dce8f8" /><path d="M4 17l11-1 2 3H6Z" fill="#aab4be" /><path d="M12 25l10-5-2 5-9 3Z" fill="#8a949c" />
          </Svg>
          <div className="ml-[3px] flex flex-col gap-[3px] pb-px"><T w={22}>Ethernet</T><T w={41} className="text-[#68758a]">mycompany.pri</T><T w={98} className="text-[#68758a]">Microsoft Hyper-V Network Adapter</T></div>
        </div>
      </div>
      <div className="flex h-[19px] shrink-0 items-center bg-white pl-[7px] text-[#555]"><T w={19}>2 items</T><T w={42} className="ml-[11px]">1 item selected</T></div>
    </div>
  );
}

function Web2Machine() {
  return (
    <VmWindow className="top-[63px] left-[345px]" title="WEB2 on LEGION - Virtual Machine Connection" titleWidth={125} grip
      icons={[['server', 'open'], ['ps'], ['folder', 'open'], ['ie', 'open'], ['iis', 'open'], ['cmd', 'open'], ['diamond'], ['alert'], ['check'], ['card', 'active'], ['picture', 'open']]}
      tray={<>
        <i className="mr-1 h-[20px] w-[4px] border-x border-dotted border-[#276b80]" />
        <T w={45} className="text-[8px]">SysinternalsSuite</T>
        <span className="mr-[7px] ml-[3px] pb-[14px] text-[9px] leading-none">»</span>
        <TrayIcons /><div className="mr-[7px] ml-[6px]"><Clock /></div>
      </>}>
      <div className="flex h-full flex-col text-[8px]">
        <div className="flex h-[16px] shrink-0 items-center bg-[#bfced6] pl-[2px]"><IisIcon /></div>
        <AddressBar server="WEB2" className="h-[20px] pt-px" />
        <MenuBar items={[['File', 9], ['View', 13], ['Help', 13]]} className="h-[18px] bg-linear-to-b from-white to-[#f0f0f0] pb-[2px] pl-[7px]" />
        <div className="flex min-h-0 flex-1 bg-[#f0f0f0]">
          <div className="flex pb-[2px]"><ConnectionsPane server="WEB2" tail="C" sites={[['Default Web Site', 44], ['inside', 15, true]]} /></div>
          <div className="ml-[3px] flex flex-1 flex-col">
            <div className="flex-1 overflow-hidden border border-[#aaa] bg-white">
              <div className="flex h-[34px] items-center pl-[6px]"><Globe className="h-[21px] w-[16px]" /><T w={70} className="ml-[9px] text-[13px]">Default Web Site</T></div>
              <div className="flex h-[13px] items-center pl-[10px]"><T w={14}>Filter:</T></div>
              <div className="mt-[4px] flex h-[10px] items-center border-t border-[#eee] pl-[12px] text-[#47648f]"><T w={23}>ASP.NET</T></div>
              <Feature className="mt-[5px] h-[50px]" lines={[['.NET', 12], ['Authorizat...', 32]]} icon={<><path d="M1 0h11v14H1Z" fill="#f3f3e6" stroke="#999" /><path d="M3 3h7M3 6h7M3 9h5" stroke="#889" /><path d="M7 11h8v8H7Z" fill="#d7a82b" /><path d="M9 11V8h4v3" stroke="#777" fill="none" /></>} />
              <Feature className="h-[50px]" lines={[['Providers', 25]]} icon={<><path d="M1 0h8v16H1Z" fill="#e8bf3d" /><path d="M3 2h10v14H3Z" fill="#f2d366" /><circle cx="11" cy="9" r="3" fill="#b07842" /><path d="M6 19c0-7 10-7 10 0Z" fill="#56769e" /></>} />
              <div className="flex h-[10px] items-center gap-1 pl-[12px] text-[#47648f]"><T w={6}>IIS</T><i className="h-px flex-1 bg-[#ddd]" /></div>
              <Feature className="mt-[6px] h-[50px]" lines={[['ASP', 10]]} icon={<><path d="M3 0h12v18H3Z" fill="#edf2f4" stroke="#99a" /><circle cx="9" cy="6" r="4" fill="#2e7fa8" /><circle cx="5" cy="14" r="3" fill="none" stroke="#99a2a8" strokeWidth="2" /></>} />
              <Feature className="h-[51px]" lines={[['Modules', 23]]} icon={<><path d="M6 0h4v19H6Z" fill="#e2c846" /><path d="M11 0h5v19h-5Z" fill="#a66dc0" /><path d="M3 7h10" stroke="#3c7bc4" strokeWidth="4" /><path d="M0 14l5-4v2h6v4H5v2Z" fill="#5bb63a" /></>} />
              <div className="flex h-[10px] items-center pl-[12px] text-[#47648f]"><T w={38}>Management</T></div>
              <Feature className="mt-[5px]" lines={[['Configurat...', 33], ['Editor', 16]]} icon={<><path d="M2 1h12v17H2Z" fill="#e9e9ee" stroke="#889" /><path d="M4 4h8M4 7h2M7 7h5M4 10h2M7 10h5M4 13h2M7 13h5" stroke="#889" /></>} />
            </div>
            <div className="flex h-[20px] items-center pb-[2px] pl-[3px]">
              <span className="flex h-[13px] items-center border border-[#5c97cc] bg-white px-px"><Svg className="h-[10px] w-[9px]" box="0 0 9 10"><path d="M.5.5h8v9h-8Z" fill="#dde" stroke="#889" /></Svg><T w={36} className="ml-px">Features View</T></span>
            </div>
          </div>
        </div>
        <div className="flex h-[15px] shrink-0 items-center justify-between bg-[#f0f0f0] pr-[6px] pb-px pl-px"><T w={16}>Ready</T><IisIcon /></div>
      </div>
      <NetworkWindow />
    </VmWindow>
  );
}

/* ---------- WEB1 machine ---------- */

type Action = { kind: 'link' | 'head' | 'bar' | 'off'; text: string; w: number; h: string; icon?: ReactNode; line?: boolean };

const actions: Action[] = [
  { kind: 'link', text: 'Open Feature', w: 36, h: 'h-[18px]', line: true },
  { kind: 'link', text: 'Explore', w: 19, h: 'h-[15px]', icon: <><path d="M0 1h5l3 3v6H0Z" fill="#e0bd3f" /><path d="M3 3h3v6H3Z" fill="#fff3b8" /></> },
  { kind: 'link', text: 'Edit Permissions...', w: 47, h: 'h-[14px]', line: true },
  { kind: 'head', text: 'Edit Site', w: 23, h: 'h-[16px]' },
  { kind: 'link', text: 'Bindings...', w: 28, h: 'h-[14px]' },
  { kind: 'link', text: 'Basic Settings...', w: 41, h: 'h-[13.500px]', icon: <path d="M.5.5h7v9h-7ZM2 3h4M2 5h4M2 7h4" fill="#eee" stroke="#777" />, line: true },
  { kind: 'link', text: 'View Applications', w: 47, h: 'h-[16px]' },
  { kind: 'link', text: 'View Virtual Directories', w: 61, h: 'h-[14px]', line: true },
  { kind: 'bar', text: 'Manage Website', w: 47, h: 'h-[20px]' },
  { kind: 'link', text: 'Restart', w: 18, h: 'h-[12px]', icon: <path d="M1 4C2 0 6 1 7 3M7 6C6 10 2 9 1 7M7 0v3H4M1 10V7h3" fill="none" stroke="#43a33c" strokeWidth="1.400" /> },
  { kind: 'off', text: 'Start', w: 13, h: 'h-[14px]', icon: <path d="M2 2l3 3-3 4Z" fill="#999" /> },
  { kind: 'link', text: 'Stop', w: 12, h: 'h-[14px]', icon: <path d="M1 2h6v6H1Z" fill="#2e2e2e" />, line: true },
  { kind: 'head', text: 'Browse Website', w: 46, h: 'h-[16px]' },
  { kind: 'link', text: 'Browse *:80 (http)', w: 47, h: 'h-[14px]', icon: <><path d="M.5 1h7v8h-7Z" fill="#d9ece4" stroke="#5a8476" /><path d="M4 3v5M2 5l2 3 2-3" stroke="#258252" fill="none" /></>, line: true },
  { kind: 'link', text: 'Advanced Settings...', w: 53, h: 'h-[17px]', line: true },
  { kind: 'head', text: 'Configure', w: 28, h: 'h-[16px]' },
  { kind: 'link', text: 'Failed Request Tracing...', w: 64, h: 'h-[13px]' },
  { kind: 'link', text: 'Limits...', w: 20, h: 'h-[14px]', line: true },
  { kind: 'link', text: 'Add FTP Publishing...', w: 56, h: 'h-[18px]', line: true },
  { kind: 'link', text: 'Install Application From', w: 63, h: 'h-[12px]', icon: <><circle cx="4" cy="6" r="3.500" fill="#d95347" /><path d="M4 3a3 3 0 0 1 3 5L4 6Z" fill="#4c9d57" /><circle cx="4" cy="6" r="1.300" fill="#fff" /></> },
  { kind: 'link', text: 'Gallery', w: 19, h: 'h-[8px]' },
];

function ActionsPane() {
  return (
    <div className="flex h-[318px] w-[100px] shrink-0 flex-col overflow-hidden border-l border-[#999] text-[8px]">
      <div className="flex h-[15px] shrink-0 items-center bg-[#979797] pl-[3px] font-bold text-[#111]"><T w={21}>Actions</T></div>
      <div className="flex min-h-0 flex-1 bg-linear-to-r from-white to-[#e9e9eb]">
        <div className="w-[89px] pt-px pl-[2px]">
          {actions.map((a) => (
            <div key={a.text} className={`flex items-center ${a.h} ${a.line ? 'border-b border-[#b0b0b0]' : ''} ${a.kind === 'bar' ? 'bg-[#f4f4f6]' : ''}`}>
              {a.kind !== 'bar' && <span className="flex w-[12px] shrink-0">{a.icon && <Svg className="h-[10px] w-2" box="0 0 8 10">{a.icon}</Svg>}</span>}
              <T w={a.w} className={a.kind === 'head' || a.kind === 'bar' ? `font-bold text-[#111] ${a.kind === 'bar' ? 'ml-px' : ''}` : a.kind === 'off' ? 'text-[#a5a5a5]' : 'text-[#3c66ad]'}>{a.text}</T>
              {a.kind === 'bar' && <span className="mr-[4px] ml-auto flex h-[10px] w-2 items-center justify-center rounded-full border border-[#999] bg-white"><ChevronUp className="h-[7px] w-[7px]" strokeWidth={3} /></span>}
            </div>
          ))}
        </div>
        <ScrollBar className="mr-px ml-auto w-[9px]" thumb="h-[206px]" />
      </div>
    </div>
  );
}

function ScrollBar({ className, thumb }: { className: string; thumb: string }) {
  return (
    <div className={`flex flex-col border-x border-[#ddd] bg-[#f5f5f5] text-[#333] ${className}`}>
      <span className="flex h-[10px] shrink-0 items-center justify-center bg-white"><ChevronUp className="h-[7px] w-[6px]" strokeWidth={3} /></span>
      <span className={`flex flex-col items-center justify-center gap-px border border-[#aaa] bg-[#cfcfd2] ${thumb}`}>
        <i className="h-px w-[5px] bg-[#333]" /><i className="h-px w-[5px] bg-[#333]" /><i className="h-px w-[5px] bg-[#333]" />
      </span>
      <span className="mt-auto flex h-[10px] shrink-0 items-center justify-center border border-[#ddd] bg-white"><ChevronUp className="h-[7px] w-[6px] rotate-180" strokeWidth={3} /></span>
    </div>
  );
}

function EditBinding() {
  return (
    <div className="absolute top-[92px] left-[151px] flex h-[214px] w-[271px] flex-col border border-[#1f6f88] bg-[#66cbe3] px-[3px] pb-[3px] text-[8px] text-[#111]">
      <div className="flex h-[19px] shrink-0">
        <T w={55} className="ml-[103px] pt-[4px] text-[10px] text-[#123c4b]">Edit Site Binding</T>
        <div className="ml-auto flex h-[13px] border border-t-0 border-[#32839c] font-bold text-black">
          <span className="flex w-[14px] items-center justify-center text-[8px]">?</span>
          <span className="flex w-[23px] items-center justify-center bg-[#c34b4f] text-[8px] text-[#3b0a0c]">x</span>
        </div>
      </div>
      <div className="flex flex-1 flex-col bg-[#f0f0f0] px-[7px]">
        <div className="mt-[9px] flex items-start gap-[4px]">
          <div className="flex flex-col gap-[3px]"><T w={15} className="ml-px">Type:</T>
            <span className="flex h-[15px] w-[58px] items-center justify-between border border-[#c2c2c2] px-px text-[#888]"><T w={12}>http</T><ChevronUp className="h-[6px] w-[6px] rotate-180" /></span>
          </div>
          <div className="flex flex-col gap-[3px]"><T w={30}>IP address:</T>
            <span className="flex h-[15px] w-[106px] items-center justify-between border border-[#3a6ea5] bg-white px-px"><span className="flex h-[11px] items-center bg-[#3d95ee] text-white"><T w={40}>All Unassigned</T></span><ChevronUp className="h-[6px] w-[6px] rotate-180" strokeWidth={3} /></span>
          </div>
          <div className="flex flex-col gap-[3px]"><T w={13}>Port:</T><span className="flex h-[15px] w-[29px] items-center border border-[#999] bg-white pl-px"><T w={7}>80</T></span></div>
        </div>
        <T w={31} className="mt-[9px] ml-px">Host name:</T>
        <span className="mt-[3px] h-[15px] w-[151px] shrink-0 border border-[#999] bg-white" />
        <T w={147} className="mt-[6px] ml-px">Example: www.contoso.com or marketing.contoso.com</T>
        <div className="mt-auto mb-[11px] flex justify-end gap-[5px]">
          <span className="flex h-[16px] w-[45px] items-center justify-center border border-[#d5d5d5] text-[#aaa]"><T w={8}>OK</T></span>
          <span className="mr-px flex h-[16px] w-[49px] items-center justify-center border border-[#3d8dc4] bg-[#bfe3f5]"><T w={18}>Cancel</T></span>
        </div>
      </div>
      <svg viewBox="0 0 8 14" className="absolute top-[185px] left-[221px] h-[13px] w-[7px]"><path d="M1 1v10l2.300-2L5 13l1.300-.7L4.800 8.500H7.500Z" fill="#fff" stroke="#111" strokeWidth=".8" /></svg>
    </div>
  );
}

function SiteBindings() {
  return (
    <div className="absolute top-[71px] left-[123px] flex h-[256px] w-[328px] flex-col border border-[#86979b] bg-[#bbcfd2] px-[3px] pb-[3px] text-[8px] text-[#111]">
      <div className="flex h-[20px] shrink-0">
        <T w={44} className="ml-[138px] pt-[4px] text-[10px]">Site Bindings</T>
        <div className="ml-auto flex h-[14px] border border-t-0 border-[#86979b] font-bold text-black">
          <span className="flex w-[14px] items-center justify-center border-r border-[#86979b]">?</span>
          <span className="flex w-[23px] items-center justify-center">X</span>
        </div>
      </div>
      <div className="flex flex-1 flex-col bg-[#f0f0f0] pr-[7px] pl-[6px]">
        <div className="mt-[9px] flex justify-between">
          <div className="flex h-[185px] w-[240px] flex-col gap-[4px] border border-[#999] bg-white pt-[3px] pl-[3px]"><T w={13}>Type</T><T w={11}>http</T></div>
          <div className="flex flex-col gap-[6px]">
            {['Add...', 'Edit...', 'Remove', 'Browse'].map((b, i) => (
              <span key={b} className={`flex h-[16px] w-[50px] items-center justify-center border ${i === 2 ? 'border-[#ccc] text-[#aaa]' : 'border-[#888] bg-[#dedede]'}`}><T w={i < 2 ? 12 : 20}>{b}</T></span>
            ))}
          </div>
        </div>
        <span className="mt-[10px] ml-auto flex h-[17px] w-[52px] shrink-0 items-center justify-center border border-[#888] bg-[#dedede]"><T w={15}>Close</T></span>
      </div>
    </div>
  );
}

function IisWindow() {
  const scraps: [string, number, string][] = [['Filter:', 14, 'mt-[9px] ml-px'], ['ASP.NET', 23, 'mt-[7px] ml-[4px]'], ['Authorizat...', 32, 'mt-[40px]'], ['Compilat...', 32, 'mt-[32px] ml-px'], ['IIS', 6, 'mt-[20px] ml-[4px]'], ['Authentic...', 32, 'mt-[29px] ml-[2px]'], ['Logging', 24, 'mt-[2px] ml-[4px]']];
  const captions: [string, number, string][] = [['Mappings', 27, 'ml-[11px]'], ['Redirect', 22, 'ml-[13px]'], ['Respon...', 24, 'ml-[15px]'], ['and Doma...', 32, 'ml-[9px]'], ['Caching', 22, 'ml-[161px]']];
  return (
    <div className="absolute top-[85px] left-[78px] flex h-[400px] w-[576px] flex-col border border-[#71888e] bg-[#bfd0d3] px-[3px] pb-[4px] text-[8px] text-[#111]">
      <div className="flex h-[20px] shrink-0">
        <span className="pt-[4px] pl-[2px]"><IisIcon /></span>
        <T w={142} className="ml-[202px] pt-[5px] text-[10px]">Internet Information Services (IIS) Manager</T>
        <div className="ml-auto flex h-[14px] border border-t-0 border-[#6c8288] font-bold text-black">
          <span className="flex w-[14px] items-center justify-center border-r border-[#6c8288]"><i className="mt-[3px] h-[2px] w-[6px] bg-black" /></span>
          <span className="flex w-[14px] items-center justify-center border-r border-[#6c8288]"><i className="h-[5px] w-[6px] border-[1.500px] border-black" /></span>
          <span className="flex w-[21px] items-center justify-center">X</span>
        </div>
      </div>
      <AddressBar server="WEB1" className="h-[21px] pt-[2px]">
        <div className="flex w-[57px] items-center gap-[3px] pb-[5px] pl-[3px]">
          <i className="h-[9px] w-2 border border-[#2c7e34] bg-[#6fce73]" />
          <i className="ml-px h-[9px] w-2 border border-[#c4c9cf] bg-[#dde1e6]" />
          <Svg className="h-[10px] w-[7px]" box="0 0 7 10"><path d="M0 5l3.500-5L7 5v5H0Z" fill="#bbc1c8" /></Svg>
          <i className="h-3 w-px bg-[#c4c9cf]" />
          <span className="flex h-[10px] w-2 items-center justify-center rounded-full bg-[#2c3d8f] text-[7px] font-bold text-white">?</span>
          <Svg className="h-[2px] w-[4px]" box="0 0 4 2"><path d="M0 0h4L2 2Z" fill="#111" /></Svg>
        </div>
      </AddressBar>
      <MenuBar items={[['File', 9], ['View', 13], ['Help', 13]]} className="h-[18px] shrink-0 bg-linear-to-b from-white to-[#efefef] pb-px pl-[7px]" />
      <div className="flex h-[318px] shrink-0 bg-[#ededed]">
        <ConnectionsPane server="WEB1" tail="C" sites={[['Default Web Site', 44], ['NewSite', 22, true], ['Secured', 21, true], ['UnSecured', 28, true]]} />
        <div className="ml-[4px] flex w-[361px] shrink-0 flex-col">
          <div className="flex h-[300px] flex-col border border-[#c5c5c5] bg-white">
            <div className="flex h-[263px] flex-col overflow-hidden pt-[8px] pl-[6px]">
              <Globe className="h-[20px] w-[16px]" />
              <div className="flex flex-col pl-[2px]">{scraps.map(([t, w, cls]) => <T key={t} w={w} className={cls}>{t}</T>)}</div>
            </div>
            <div className="flex h-[15px] items-center pb-px">{captions.map(([t, w, cls]) => <T key={t} w={w} className={cls}>{t}</T>)}</div>
            <div className="flex h-[16px] items-center gap-[24px] pl-[18px]">
              <Svg className="h-[8px] w-[14px]" box="0 0 14 8"><ellipse cx="7" cy="4" rx="6" ry="4" fill="#4b4e63" /><path d="M3 4h8" stroke="#aab" /></Svg>
              <Svg className="h-[8px] w-[13px]" box="0 0 13 8"><path d="M0 1h5v6H0ZM7 1l5 3-2 3Z" fill="#dfe3df" stroke="#9aa79a" /></Svg>
              <Svg className="h-[9px] w-[8px]" box="0 0 8 9"><path d="M1 9V4c0-4 6-4 6 0v5" fill="none" stroke="#808a2b" strokeWidth="2" /></Svg>
              <Svg className="h-[9px] w-[15px]" box="0 0 15 9"><path d="M0 8h13M9 8l6-7" stroke="#8aa07e" strokeWidth="1.300" /></Svg>
            </div>
          </div>
          <div className="flex flex-1 items-center bg-[#e2e3e3] pl-[2px]">
            <span className="flex h-[14px] items-center border border-[#4d91c7] bg-white px-px"><Svg className="h-[10px] w-[8px]" box="0 0 8 10"><path d="M.5.5h7v9h-7Z" fill="#dde" stroke="#889" /></Svg><T w={37} className="ml-px">Features View</T></span>
            <Svg className="ml-[2px] h-[10px] w-[8px]" box="0 0 8 10"><path d="M0 0h5v7H0Z" fill="#ead98a" /><path d="M3 3h5v7H3Z" fill="#f7f7f0" stroke="#998" strokeWidth=".6" /></Svg>
            <T w={36} className="ml-[2px]">Content View</T>
          </div>
        </div>
        <div className="ml-[3px]"><ActionsPane /></div>
      </div>
      <div className="flex flex-1 items-center justify-between bg-[#f5f5f5] pr-[3px] pl-px"><T w={16}>Ready</T><IisIcon /></div>
      <div className="absolute top-[111px] left-[451px] flex h-[238px]"><ScrollBar className="w-[9px]" thumb="h-[149px]" /></div>
      <SiteBindings />
      <EditBinding />
    </div>
  );
}

function Browser() {
  return (
    <>
      <div className="flex h-[22px] bg-[#c2d1d6]">
        <div className="mt-[2px] ml-[3px] flex w-[121px] items-center rounded-t-md bg-white pb-[2px] pl-[8px] text-[8px] text-[#555]">
          <FileIcon className="h-[9px] w-[7px]" strokeWidth={3} />
          <T w={55} className="ml-[4px]">Web Server/Site Info</T>
          <Svg className="mr-[6px] ml-auto h-[5px] w-[4px]" box="0 0 4 5"><path d="M0 0l4 5M4 0 0 5" stroke="#111" /></Svg>
        </div>
        <span className="mt-[3px] ml-[3px] flex h-[15px] w-[15px] items-center justify-center rounded-full bg-[#dde5e4]"><Svg className="h-[7px] w-[7px]" box="0 0 7 7"><path d="M3.500 0v7M0 3.500h7" stroke="#222" /></Svg></span>
        <div className="mr-px ml-auto flex h-[12px] border border-t-0 border-[#6c8288] text-[8px] font-bold text-black">
          <span className="flex w-[13px] items-center justify-center border-r border-[#6c8288]"><i className="mt-[2px] h-[2px] w-[6px] bg-black" /></span>
          <span className="flex w-[13px] items-center justify-center border-r border-[#6c8288]"><i className="h-[6px] w-[5px] border-[1.500px] border-black" /></span>
          <span className="flex w-[22px] items-center justify-center">X</span>
        </div>
      </div>
      <div className="flex h-[24px] items-center border-b border-[#ccc] bg-white pl-[5px] text-[9px] text-[#555]">
        <ArrowLeft className="h-[11px] w-[10px]" strokeWidth={2.500} />
        <ArrowRight className="ml-[6px] h-[11px] w-[10px] text-[#bbb]" strokeWidth={2.500} />
        <RotateCw className="ml-[6px] h-[11px] w-[9px]" strokeWidth={2.500} />
        <div className="ml-[9px] flex h-[20px] flex-1 items-center rounded-full bg-[#f1f2f3] pr-[4px] pl-[4px]">
          <Info className="h-[11px] w-[9px]" strokeWidth={2.500} />
          <T w={34} className="ml-[4px] text-[#888]">Not secure</T>
          <i className="mr-[4px] ml-[3px] h-[10px] w-px bg-[#bbb]" />
          <T w={67} className="text-[#333]">www.mycompany.pri/</T>
          <Star className="ml-auto h-[10px] w-[8px]" strokeWidth={2.500} />
        </div>
        <CircleUserRound className="ml-[7px] h-[12px] w-[9px]" strokeWidth={3.500} />
        <MoreVertical className="mr-[6px] ml-[8px] h-[11px] w-[8px]" strokeWidth={2.500} />
      </div>
      <SiteInfo className="mt-[5px] h-[276px] pl-[4px]" host="www.mycompany.pri" />
      <div className="absolute top-[44px] right-0 h-[86px] w-[161px] border-l border-b border-[#b5b5b5] bg-white pl-[8px] text-[#444] shadow">
        <div className="flex h-[14px] items-end justify-end pr-[6px]"><Svg className="h-[7px] w-[5px]" box="0 0 5 7"><path d="M0 0l5 7M5 0 0 7" stroke="#444" /></Svg></div>
        <div className="-mt-px flex h-[12px] items-center text-[10px]"><T w={50}>Restore pages?</T></div>
        <div className="mt-[6px] flex h-[12px] items-center text-[8.500px]"><T w={93}>Chrome didn't shut down correctly.</T></div>
        <span className="mt-[11px] mr-[8px] ml-auto flex h-[21px] w-[50px] items-center justify-end rounded-sm bg-[#3f72e3] pr-[8px] text-[8px] text-white"><T w={21}>Restore</T></span>
      </div>
    </>
  );
}

function Web1Machine() {
  return (
    <VmWindow className="top-[7px] left-[561px]" title="WEB1 on LEGION - Virtual Machine Connection" titleWidth={125} active
      icons={[['server', 'open'], ['ps'], ['folder', 'open'], ['iis', 'active'], ['ie'], ['chrome', 'open'], ['cmd'], ['flame'], ['thumb'], ['note'], ['tiger'], ['tiger'], ['npp'], ['cube'], ['picture', 'open']]}
      tray={<><Svg className="mr-[8px] h-[2px] w-[3px]" box="0 0 3 2"><path d="M0 2h3L1.500 0Z" fill="#123" /></Svg><TrayIcons /><div className="mr-[6px] ml-[6px]"><Clock /></div></>}>
      <Browser />
      <IisWindow />
    </VmWindow>
  );
}

/* ---------- host ---------- */

function PanelArrow({ right }: { right?: boolean }) {
  return <Svg className="h-[5px] w-[5px]" box="0 0 5 5"><path d={right ? 'M1 0l3 2.500L1 5Z' : 'M0 4.500h5L2.500.5Z'} fill="#111" /></Svg>;
}

function HyperVManager() {
  const server = <Svg className="h-[10px] w-2" box="0 0 8 10"><path d="M0 0h4v10H0ZM4 3h4v7H4Z" fill="#41a184" /><path d="M1 2h2M1 4h2M5 5h2M5 7h2" stroke="#d7f5ea" /></Svg>;
  return (
    <div className="flex h-[693px] flex-col border-b-[3px] border-[#8d8d8d] bg-white text-[8px] text-[#111]">
      <div className="flex h-[15px] shrink-0 items-center pl-[2px] text-[#999]">{server}<T w={47} className="ml-[2px]">Hyper-V Manager</T>
        <Svg className="mr-[10px] mb-[3px] ml-auto h-[6px] w-[5px]" box="0 0 5 6"><path d="M0 0l5 6M5 0 0 6" stroke="#aaa" strokeWidth=".8" /></Svg>
      </div>
      <MenuBar items={[['File', 9], ['Action', 17], ['View', 13], ['Help', 13]]} className="h-[16px] shrink-0 border-b border-[#ddd] pl-[5px]" />
      <div className="flex h-[19px] shrink-0 items-center gap-[3px] border-b border-[#bbb] bg-linear-to-b from-white to-[#f0f0f0] pb-px pl-[2px]">
        <Svg className="h-2 w-[9px]" box="0 0 9 8"><path d="M0 4l4-4v2.500h5v3H4V8Z" fill="#3b91c5" /></Svg>
        <Svg className="h-2 w-[9px]" box="0 0 9 8"><path d="M9 4L5 0v2.500H0v3h5V8Z" fill="#777" /></Svg>
        <i className="h-3 w-px bg-[#ccc]" />
        <Svg className="h-[10px] w-2" box="0 0 8 10"><path d="M0 1h4l1 2h3v7H0Z" fill="#e2c556" /><path d="M2 6l3-4 2 3" stroke="#3d9b35" fill="none" /></Svg>
        <span className="flex h-[14px] w-[11px] items-center justify-center bg-[#cfe3f2]"><i className="h-[9px] w-2 border border-t-2 border-[#6c8ba1] bg-white" /></span>
        <i className="h-3 w-px bg-[#ccc]" />
        <span className="flex h-[11px] w-[7px] items-center justify-center bg-[#24408c] font-bold text-white">?</span>
      </div>
      <div className="flex flex-1 bg-[#f0f0f0]">
        <div className="w-[100px] shrink-0 border-x border-b border-l-2 border-[#9c9c9c] bg-white pt-[4px]">
          <div className="flex h-3 items-center pl-[2px]">{server}<T w={47} className="ml-[2px]">Hyper-V Manager</T></div>
          <div className="flex h-3 items-center pl-[12px]">{server}<span className="ml-px bg-[#dcdcdc] px-px"><T w={20}>LEGION</T></span></div>
        </div>
        <div className="ml-[2px] flex w-[939px] flex-col border-r border-[#777] bg-white pr-[7px] pl-[4px]">
          <div className="mt-auto h-[84px] border-x border-[#999]">
            <div className="flex h-[69px] pl-[6px]">
              <div className="mt-[3px] flex h-[20px] w-[40px] flex-col gap-[2px] bg-[#2b2b2b] pt-[6px] pl-[3px] text-[5px] text-[#888]"><T w={10}>8:22</T><i className="h-px w-[20px] bg-[#555]" /></div>
              <div className="mt-[9px] ml-[5px] flex flex-col gap-[5px] font-bold"><T w={33}>Generation:</T><T w={18}>Notes:</T></div>
              <div className="mt-[9px] ml-[33px] flex flex-col gap-[5px]"><T w={3}>1</T><T w={14}>None</T></div>
            </div>
            <div className="flex h-[15px] items-center border-y border-b-[#999] border-t-[#ddd] pl-[4px]">
              <T w={22}>Summary</T><span className="ml-[4px] flex h-[11px] items-center gap-[5px] bg-[#f0f0f0] px-px"><T w={19}>Memory</T><T w={28}>Networking</T></span>
            </div>
          </div>
          <div className="h-[6px]" />
        </div>
        <div className="flex flex-1 flex-col border-r-[3px] border-[#999] bg-white">
          <div className="mt-[2px] h-[15px] border-t-2 border-b border-[#777] border-b-[#ccc] bg-[#ececec]" />
          <div className="flex h-[17px] items-center justify-end bg-linear-to-b from-[#c3d2ea] to-[#9bb3dc] pt-[2px] pr-[3px]"><PanelArrow /></div>
          <div className="flex h-[48px] items-center justify-end pr-[3px]"><PanelArrow right /></div>
          <div className="flex h-[167px] items-end justify-end pr-[3px] pb-[25px]"><PanelArrow right /></div>
          <div className="flex h-[17px] items-center justify-end bg-linear-to-b from-[#c3d2ea] to-[#9bb3dc] pr-[3px]"><PanelArrow /></div>
        </div>
      </div>
      <div className="h-[15px] shrink-0 border-t border-[#ddd] bg-[#f0f0f0]" />
    </div>
  );
}

const pinned = ['explorer', 'vscode', 'loop', 'vs', 'vs2', 'onenote', 'firefox', 'edge', 'box', 'farm', 'chrome', 'pcblue', 'putty', 'medal', 'term', 'note', 'cmd', 'atom', 'plane', 'ring', 'glyph', 'blend', 'cam', 'swirl', 'gear', 'vm', 'orange'];
const running = ['onenote', 'box', 'farm', 'chrome', 'note', 'vm', 'orange'];

function HostTaskbar() {
  return (
    <div className="flex h-[27px] items-stretch bg-[#0c0c0c] text-[9px] text-white">
      <div className="flex w-[24px] items-center justify-center"><Svg className="h-[11px] w-[8px]" box="0 0 8 11"><path d="M0 0h3.600v5H0ZM4.400 0H8v5H4.400ZM0 6h3.600v5H0ZM4.400 6H8v5H4.400Z" fill="#fff" /></Svg></div>
      <div className="flex w-[144px] items-center bg-[#f4f4f4] pl-[6px] text-[#444]">
        <Search className="h-[11px] w-[9px] -scale-x-100" strokeWidth={2.500} />
        <T w={65} className="ml-[5px]">Type here to search</T>
        <Svg className="ml-auto mr-[5px] h-[18px] w-[32px]" box="0 0 32 18">
          <path d="M13 1l2 6 6 2-6 2-2 6-2-6-6-2 6-2Z" fill="#f5cd2e" stroke="#f5cd2e" /><path d="M25 7l1 3 3 1-3 1-1 3-1-3-3-1 3-1Z" fill="#f3d54a" />
          <path d="M2 11l1 2 2 1-2 1-1 2-1-2-1-1 1-1Z" fill="#369bd0" /><circle cx="21" cy="2" r="1.200" fill="#d8848a" /><circle cx="30" cy="15" r="1.200" fill="#aaa" />
        </Svg>
      </div>
      <div className="flex w-[24px] items-center justify-center"><Svg className="h-[11px] w-[9px]" box="0 0 9 11"><path d="M.5 0v2h5V0M.5 11V9h5v2M.5 4h5v3h-5ZM8 0v3M8 4v7" stroke="#ddd" fill="none" /></Svg></div>
      <i className="mt-[9px] mr-[6px] ml-[4px] h-[10px] w-px bg-[#333]" />
      {pinned.map((name) => (
        <div key={name} className={`flex w-[24.500px] shrink-0 items-center justify-center border-b-2 ${running.includes(name) ? 'border-[#e2b27c]' : 'border-transparent'} ${name === 'vm' ? 'bg-[#3a3f44]' : ''}`}>
          <Svg className="h-[16px] w-[13px]">{hostIcons[name]}</Svg>
        </div>
      ))}
      <div className="mr-[12px] ml-auto flex items-center">
        <Svg className="h-[14px] w-[11px]" box="0 0 11 14"><ellipse cx="5.500" cy="8" rx="3.500" ry="5" fill="#c01920" /><path d="M0 4h11M0 8h11M0 12h11M3 2h5" stroke="#9b1218" /></Svg>
        <span className="ml-[4px] flex h-[12px] w-[24px] items-center justify-center border border-[#d7e8d7] bg-[#1c9c3f]"><T w={18}>100%</T></span>
        <i className="h-[5px] w-px bg-white" />
        <Svg className="ml-[4px] h-[10px] w-[5px]" box="0 0 5 10"><path d="M0 3h5v3L3.500 8v2h-2V8L0 6ZM1 0h1v3H1ZM3 0h1v3H3Z" fill="#eee" /></Svg>
        <Svg className="ml-[25px] h-[15px] w-[12px]" box="0 0 12 15"><path d="M6 1c4 6 1 11-5 11 4 5 11 3 11-4 0-4-3-7-6-7Z" fill="#f0b63c" /><path d="M0 5c0-4 6-4 6 0v3H0Z" fill="#cbd5ed" /></Svg>
        <T w={13} className="ml-[5px]">49°F</T><T w={37} className="ml-[5px]">Mostly clear</T>
        <ChevronUp className="ml-[11px] h-[9px] w-[9px]" />
        <Svg className="ml-[5px] h-[10px] w-[6px]" box="0 0 6 10"><path d="M.5 2h5v7h-5ZM2 0h3M2 4h2v3H2Z" stroke="#eee" fill="none" /></Svg>
        <Svg className="ml-[6px] h-[11px] w-[5px]" box="0 0 5 11"><path d="M1 0h3v7H1ZM2 7h1v4H2Z" fill="#fff" /></Svg>
        <Svg className="ml-[5px] h-[11px] w-[9px]" box="0 0 9 11"><path d="M1 2h5v7H1ZM4 1h4v4H5" stroke="#eee" fill="none" /><circle cx="7" cy="8.500" r="2" fill="#e39a2e" /></Svg>
        <Svg className="ml-[4px] h-[8px] w-[8px]" box="0 0 8 8"><path d="M1 2h6v5H1Z" fill="#ddd" stroke="#fff" /><path d="M0 1h3v3H0Z" fill="#fff" /></Svg>
        <Volume2 className="ml-[3px] h-[11px] w-[10px]" />
        <div className="ml-[3px] flex w-[30px] flex-col items-center gap-[3px] pb-[2px] text-[8px]"><T w={22}>7:39 PM</T><T w={29}>11/11/2025</T></div>
        <MessageSquare className="ml-[6px] h-[12px] w-[10px]" />
      </div>
    </div>
  );
}

export default function App() {
  return (
    <div className="relative h-[720px] w-[1280px] overflow-hidden bg-white font-['Open_Sans','Noto_Sans',sans-serif]">
      <HyperVManager />
      <HostTaskbar />
      <AdMachine />
      <Web2Machine />
      <Web1Machine />
      {/* presenter's pointer dot */}
      <span className="absolute top-[11px] left-[8px] h-[10px] w-[9px] rounded-full bg-[#d80a10]" />
    </div>
  );
}
